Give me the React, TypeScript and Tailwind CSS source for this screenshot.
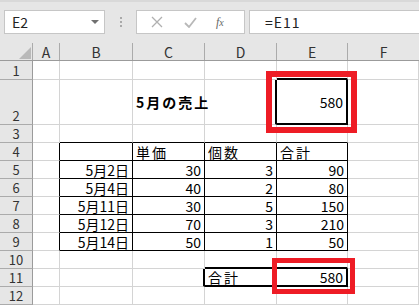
import React from "react";

type Edge = "g" | "k" | "k2";

type CellDef = {
  text?: string;
  align?: "left" | "right";
  bold?: boolean;
  center?: boolean;
  wide?: boolean;
  r?: Edge;
  b?: Edge;
};

const colWidths = ["w-[27px]", "w-[73px]", "w-[72px]", "w-[72px]", "w-[71px]", "flex-1"];
const cols = ["A", "B", "C", "D", "E", "F"];

const rowHeights: Record<number, string> = {
  1: "h-[19px]",
  2: "h-[45px]",
};

const edgeR: Record<Edge, string> = {
  g: "border-r border-r-[#d4d4d4]",
  k: "border-r border-r-black",
  k2: "border-r-2 border-r-black",
};
const edgeB: Record<Edge, string> = {
  g: "border-b border-b-[#d4d4d4]",
  k: "border-b border-b-black",
  k2: "border-b-2 border-b-black",
};

// A..F for each row; anything not listed is a plain grid cell
const sheet: Record<number, Record<string, CellDef>> = {
  1: { E: { b: "k2" } },
  2: {
    C: { text: "5月の売上", bold: true, center: true, wide: true },
    D: { r: "k2" },
    E: { text: "580", align: "right", center: true, r: "k2", b: "k2" },
  },
  3: { B: { b: "k" }, C: { b: "k" }, D: { b: "k" }, E: { b: "k" } },
  4: {
    A: { r: "k" },
    B: { r: "k", b: "k" },
    C: { text: "単価", align: "left", wide: true, r: "k", b: "k" },
    D: { text: "個数", align: "left", wide: true, r: "k", b: "k" },
    E: { text: "合計", align: "left", wide: true, r: "k", b: "k" },
  },
  10: { D: { b: "k2" }, E: { b: "k2" } },
  11: {
    C: { r: "k2" },
    D: { text: "合計", align: "left", wide: true, r: "k2", b: "k2" },
    E: { text: "580", align: "right", r: "k2", b: "k2" },
  },
};

const sales = [
  ["5月2日", "30", "3", "90"],
  ["5月4日", "40", "2", "80"],
  ["5月11日", "30", "5", "150"],
  ["5月12日", "70", "3", "210"],
  ["5月14日", "50", "1", "50"],
];

sales.forEach((s, i) => {
  const row = 5 + i;
  sheet[row] = {
    A: { r: "k" },
    B: { text: s[0], align: "right", r: "k", b: "k" },
    C: { text: s[1], align: "right", r: "k", b: "k" },
    D: { text: s[2], align: "right", r: "k", b: "k" },
    E: { text: s[3], align: "right", r: "k", b: "k" },
  };
});

const font = { fontFamily: '"Noto Sans CJK JP", "Liberation Sans", sans-serif' };

function Toolbar() {
  return (
    <div className="h-[43px] bg-[#e6e6e6] border-t-2 border-t-[#d9d9d9] flex items-start pt-[8px] pl-[4px]">
      <div className="w-[101px] h-[24px] bg-white border border-[#c6c6c6] flex items-center justify-between pl-[7px] pr-[5px]">
        <span className="text-[14px] text-[#222] leading-none">E2</span>
        <svg width="8" height="5" viewBox="0 0 8 5">
          <path d="M0 0 L8 0 L4 4 Z" fill="#707070" />
        </svg>
      </div>
      <div className="w-[31px] h-[24px] flex flex-col items-center justify-center gap-[2px]">
        <span className="w-[2px] h-[2px] bg-[#a9a9a9]" />
        <span className="w-[2px] h-[2px] bg-[#a9a9a9]" />
        <span className="w-[2px] h-[2px] bg-[#a9a9a9]" />
      </div>
      <div className="w-[109px] h-[24px] bg-white border border-[#c6c6c6] flex items-center">
        <svg width="12" height="12" viewBox="0 0 12 12" className="ml-[14px]">
          <path d="M1 1 L11 11 M11 1 L1 11" stroke="#b0b0b0" strokeWidth="1.3" fill="none" />
        </svg>
        <svg width="13" height="11" viewBox="0 0 13 11" className="ml-[21px]">
          <path d="M1 6 L5 10 L12 1" stroke="#b8b8b8" strokeWidth="1.8" fill="none" />
        </svg>
        <span
          className="ml-[19px] text-[12px] italic text-[#666] leading-none"
          style={{ fontFamily: '"Liberation Serif", serif' }}
        >
          f<span className="text-[10px]">x</span>
        </span>
      </div>
      <div className="ml-[4px] flex-1 h-[24px] bg-white border border-[#c6c6c6] border-r-0 flex items-center pl-[15px]">
        <span className="text-[14px] text-[#222] leading-none tracking-[1px]">=E11</span>
      </div>
    </div>
  );
}

function HeaderRow() {
  return (
    <div className="flex h-[18px] bg-[#e6e6e6] border-b border-b-[#9b9b9b]">
      <div className="w-[33px] border-r border-r-[#ababab] flex items-end justify-end pr-[1px] pb-[1px]">
        <svg width="12" height="12" viewBox="0 0 12 12">
          <path d="M12 0 L12 12 L0 12 Z" fill="#b9b9b9" />
        </svg>
      </div>
      {cols.map((c, i) => (
        <div
          key={c}
          className={`${colWidths[i]} ${i < 5 ? "border-r border-r-[#ababab]" : ""} flex items-center justify-center text-[14px] leading-none text-[#333]`}
        >
          {c}
        </div>
      ))}
    </div>
  );
}

function Row({ n }: { n: number }) {
  const h = rowHeights[n] ?? "h-[18px]";
  const defs = sheet[n] ?? {};
  return (
    <div className={`flex ${h}`}>
      <div className="w-[33px] bg-[#e6e6e6] border-r border-r-[#9b9b9b] border-b border-b-[#ababab] flex items-end justify-center pb-[2px] text-[13px] leading-none text-[#333]">
        {n}
      </div>
      {cols.map((c, i) => {
        const d = defs[c] ?? {};
        const r = edgeR[d.r ?? "g"];
        const b = edgeB[d.b ?? "g"];
        const justify = d.align === "right" ? "justify-end" : "justify-start";
        const valign = d.center ? "items-center" : "items-end pb-[1px]";
        return (
          <div
            key={c}
            className={`${colWidths[i]} ${r} ${b} flex ${valign} ${justify} px-[3px] text-[14px] leading-none text-black whitespace-nowrap ${d.bold ? "font-bold" : ""} ${d.wide ? "tracking-[2px]" : ""}`}
          >
            {d.text}
          </div>
        );
      })}
    </div>
  );
}

export default function App() {
  const rows = Array.from({ length: 12 }, (_, i) => i + 1);
  return (
    <div className="w-[419px] h-[306px] overflow-hidden bg-white" style={font}>
      <Toolbar />
      <div className="relative">
        <HeaderRow />
        {rows.map((n) => (
          <Row key={n} n={n} />
        ))}
        {/* red highlight boxes drawn over the sheet */}
        <div className="absolute left-[266px] top-[28px] w-[91px] h-[62px] border-[6px] border-[#ee1c25]" />
        <div className="absolute left-[272px] top-[215px] w-[83px] h-[36px] border-[5px] border-[#ee1c25]" />
      </div>
    </div>
  );
}
